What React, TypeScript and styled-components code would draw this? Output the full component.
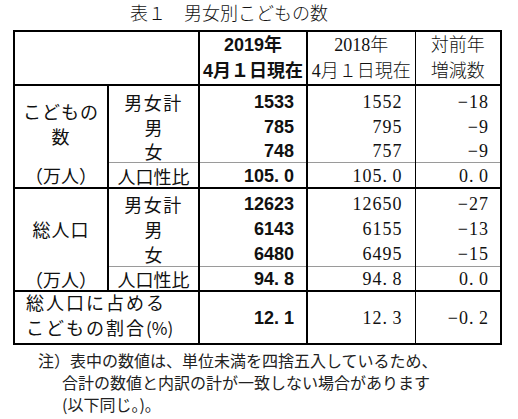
import React from "react";
import styled, { createGlobalStyle, css } from "styled-components";

const Global = createGlobalStyle`
  html, body { margin: 0; padding: 0; background: #fff; }
  body {
    width: 518px;
    height: 419px;
    overflow: hidden;
    color: #111;
    font-family: "Noto Sans CJK JP", sans-serif;
  }
`;

const GOTHIC = `"Noto Sans CJK JP", sans-serif`;
const BOLD = `"Liberation Sans", "Noto Sans CJK JP", sans-serif`;
const MINCHO = `"Liberation Serif", "Noto Sans CJK JP", serif`;

const Page = styled.div`
  display: flex;
  flex-direction: column;
  padding-left: 13px;
`;

const Title = styled.h1`
  margin: 0;
  height: 30px;
  padding-left: 117px;
  font-family: ${MINCHO};
  font-weight: 300;
  font-size: 18px;
  line-height: 28px;
  color: #111;
`;

const Table = styled.table`
  border-collapse: collapse;
  table-layout: fixed;
  width: 487px;
  border: 2px solid #000;
  font-size: 18px;
  color: #111;
`;

type Top = "thick" | "gray" | "none";

const topBorder = (t?: Top) =>
  t === "thick"
    ? css`border-top: 2px solid #000;`
    : t === "gray"
    ? css`border-top: 1px solid #9a9a9a;`
    : css`border-top: none;`;

const HeadCell = styled.th<{ $kind: "blank" | "bold" | "serif"; $thin?: boolean }>`
  border-bottom: 2px solid #000;
  border-left: ${(p) => (p.$kind === "blank" ? "2px" : p.$thin ? "1px" : "2px")} solid #000;
  padding: 0;
  line-height: 26px;
  text-align: center;
  vertical-align: middle;
  font-family: ${(p) => (p.$kind === "bold" ? BOLD : MINCHO)};
  font-weight: ${(p) => (p.$kind === "bold" ? 700 : 300)};
  white-space: nowrap;
`;

const GroupLabel = styled.td<{ $pad?: string }>`
  border-top: 2px solid #000;
  border-bottom: none;
  padding: ${(p) => p.$pad ?? "0"};
  font-family: ${GOTHIC};
  font-weight: 400;
  line-height: 25px;
  text-align: center;
  vertical-align: middle;
  letter-spacing: 1px;
`;

const UnitLabel = styled.td<{ $pad?: string }>`
  border-top: none;
  padding: ${(p) => p.$pad ?? "0"};
  font-family: ${GOTHIC};
  font-weight: 400;
  line-height: 22px;
  text-align: center;
  vertical-align: middle;
  white-space: nowrap;
`;

const RowCell = css<{ $top?: Top; $pad?: string }>`
  ${(p) => topBorder(p.$top)}
  padding: ${(p) => p.$pad ?? "0"};
  line-height: 22px;
  vertical-align: middle;
  white-space: nowrap;
`;

const SubLabel = styled.td<{ $top?: Top; $pad?: string; $spaced?: boolean }>`
  ${RowCell}
  border-left: 2px solid #000;
  font-family: ${GOTHIC};
  font-weight: 400;
  text-align: center;
  letter-spacing: ${(p) => (p.$spaced ? "1.5px" : "0")};
`;

const BoldNum = styled.td<{ $top?: Top; $pad?: string }>`
  ${RowCell}
  border-left: 2px solid #000;
  font-family: ${BOLD};
  font-weight: 700;
  text-align: right;
  padding-right: 12px;
`;

const SerifNum = styled.td<{ $top?: Top; $pad?: string; $thin?: boolean }>`
  ${RowCell}
  border-left: ${(p) => (p.$thin ? "1px" : "2px")} solid #000;
  font-family: ${MINCHO};
  font-weight: 400;
  text-align: right;
  letter-spacing: 1px;
  padding-right: ${(p) => (p.$thin ? "11px" : "12px")};
`;

const ShareLabel = styled.td`
  border-top: 2px solid #000;
  padding: 0 0 0 11px;
  font-family: ${GOTHIC};
  font-weight: 400;
  text-align: left;
  vertical-align: middle;
  letter-spacing: 2px;
  white-space: nowrap;
`;

const ShareLine = styled.div<{ $lh: number }>`
  line-height: ${(p) => p.$lh}px;
`;

const Pct = styled.span`
  letter-spacing: 0;
  font-size: 17px;
`;

const Dot = styled.span<{ $extra?: number }>`
  display: inline-block;
  width: calc(1ch + ${(p) => p.$extra ?? 0}px);
  text-align: left;
`;

const Notes = styled.div`
  margin-top: 4px;
  display: flex;
  flex-direction: column;
  font-family: ${GOTHIC};
  font-size: 16px;
  line-height: 22px;
  color: #222;
`;

const NoteLine = styled.div<{ $indent: number }>`
  margin-left: ${(p) => p.$indent}px;
  white-space: nowrap;
`;

function Num({ v, extra }: { v: string; extra?: number }) {
  const i = v.indexOf(".");
  if (i < 0) return <>{v}</>;
  return (
    <>
      {v.slice(0, i)}
      <Dot $extra={extra}>.</Dot>
      {v.slice(i + 1)}
    </>
  );
}

type Line = { label: string; v19: string; v18: string; diff: string };
type Group = {
  title: string[];
  titlePad: string;
  rows: Line[];
  pads: string[];
  ratio: { v19: string; v18: string; diff: string };
  ratioPad: string;
};

const groups: Group[] = [
  {
    title: ["こどもの", "数"],
    titlePad: "0",
    rows: [
      { label: "男女計", v19: "1533", v18: "1552", diff: "−18" },
      { label: "男", v19: "785", v18: "795", diff: "−9" },
      { label: "女", v19: "748", v18: "757", diff: "−9" },
    ],
    pads: ["4.5px 0 1.5px", "1.5px 0 1.5px", "1px 0 0"],
    ratio: { v19: "105.0", v18: "105.0", diff: "0.0" },
    ratioPad: "1.5px 0 0",
  },
  {
    title: ["総人口"],
    titlePad: "3px 0 0",
    rows: [
      { label: "男女計", v19: "12623", v18: "12650", diff: "−27" },
      { label: "男", v19: "6143", v18: "6155", diff: "−13" },
      { label: "女", v19: "6480", v18: "6495", diff: "−15" },
    ],
    pads: ["4.5px 0 1.5px", "1.5px 0 1.5px", "1.5px 0 1px"],
    ratio: { v19: "94.8", v18: "94.8", diff: "0.0" },
    ratioPad: "1px 0 0",
  },
];

export default function App() {
  return (
    <>
      <Global />
      <Page>
        <Title>表１　男女別こどもの数</Title>
        <Table>
          <colgroup>
            <col style={{ width: 94 }} />
            <col style={{ width: 91 }} />
            <col style={{ width: 108 }} />
            <col style={{ width: 108 }} />
            <col style={{ width: 86 }} />
          </colgroup>
          <thead>
            <tr>
              <HeadCell $kind="blank" colSpan={2} />
              <HeadCell $kind="bold">
                2019年
                <br />
                4月１日現在
              </HeadCell>
              <HeadCell $kind="serif">
                2018年
                <br />
                4月１日現在
              </HeadCell>
              <HeadCell $kind="serif" $thin>
                対前年
                <br />
                増減数
              </HeadCell>
            </tr>
          </thead>
          <tbody>
            {groups.map((g, gi) => (
              <React.Fragment key={gi}>
                {g.rows.map((r, ri) => {
                  const top: Top = ri === 0 ? "thick" : "none";
                  const pad = g.pads[ri];
                  return (
                    <tr key={ri}>
                      {ri === 0 && (
                        <GroupLabel rowSpan={3} $pad={g.titlePad}>
                          {g.title.map((t, ti) => (
                            <div key={ti}>{t}</div>
                          ))}
                        </GroupLabel>
                      )}
                      <SubLabel $top={top} $pad={pad} $spaced={r.label.length > 1}>
                        {r.label}
                      </SubLabel>
                      <BoldNum $top={top} $pad={pad}>
                        <Num v={r.v19} />
                      </BoldNum>
                      <SerifNum $top={top} $pad={pad}>
                        <Num v={r.v18} extra={1} />
                      </SerifNum>
                      <SerifNum $top={top} $pad={pad} $thin>
                        <Num v={r.diff} extra={1} />
                      </SerifNum>
                    </tr>
                  );
                })}
                <tr>
                  <UnitLabel $pad={g.ratioPad}>（万人）</UnitLabel>
                  <SubLabel $top="gray" $pad={g.ratioPad}>
                    人口性比
                  </SubLabel>
                  <BoldNum $top="gray" $pad={g.ratioPad}>
                    <Num v={g.ratio.v19} />
                  </BoldNum>
                  <SerifNum $top="gray" $pad={g.ratioPad}>
                    <Num v={g.ratio.v18} extra={1} />
                  </SerifNum>
                  <SerifNum $top="gray" $pad={g.ratioPad} $thin>
                    <Num v={g.ratio.diff} extra={1} />
                  </SerifNum>
                </tr>
              </React.Fragment>
            ))}
            <tr>
              <ShareLabel colSpan={2}>
                <ShareLine $lh={20}>総人口に占める</ShareLine>
                <ShareLine $lh={30}>
                  こどもの割合<Pct>(%)</Pct>
                </ShareLine>
              </ShareLabel>
              <BoldNum $top="thick">
                <Num v="12.1" />
              </BoldNum>
              <SerifNum $top="thick">
                <Num v="12.3" extra={1} />
              </SerifNum>
              <SerifNum $top="thick" $thin>
                <Num v="−0.2" extra={1} />
              </SerifNum>
            </tr>
          </tbody>
        </Table>
        <Notes>
          <NoteLine $indent={25}>注）表中の数値は、単位未満を四捨五入しているため、</NoteLine>
          <NoteLine $indent={49}>合計の数値と内訳の計が一致しない場合があります</NoteLine>
          <NoteLine $indent={49}>(以下同じ。)。</NoteLine>
        </Notes>
      </Page>
    </>
  );
}
